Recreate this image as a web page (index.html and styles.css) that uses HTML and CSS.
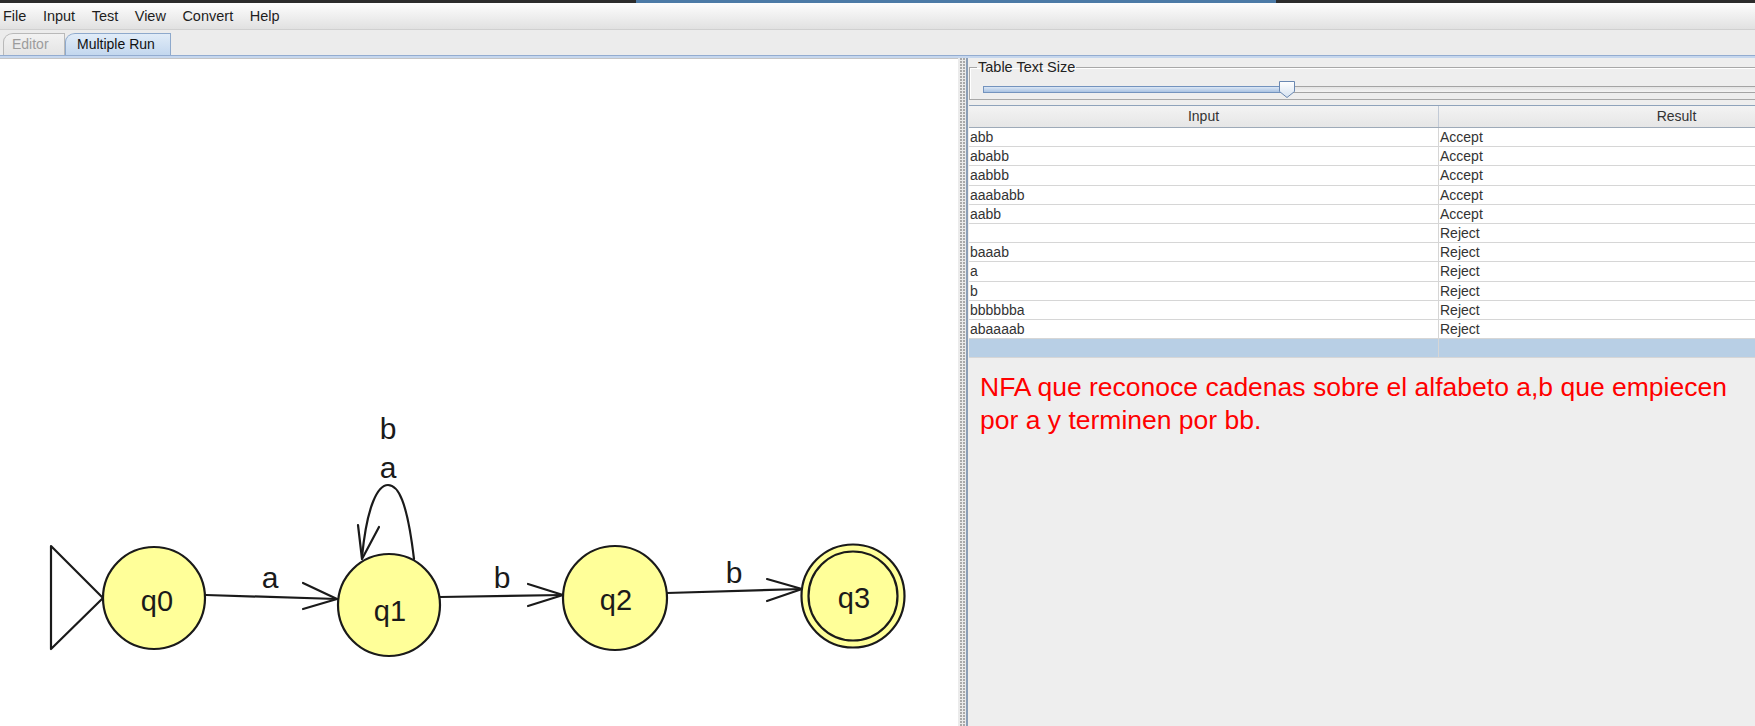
FILE: index.html
```html
<!DOCTYPE html>
<html lang="es">
<head>
<meta charset="utf-8">
<title>JFLAP - Multiple Run</title>
<link rel="stylesheet" href="styles.css">
</head>
<body>
<div class="topstrip"><div class="topstrip-active"></div></div>
<div class="menubar">
  <span>File</span><span>Input</span><span>Test</span><span>View</span><span>Convert</span><span>Help</span>
</div>
<div class="tabbar">
  <div class="tab tab-disabled">Editor</div>
  <div class="tab tab-selected">Multiple Run</div>
</div>
<div class="tabline"></div>
<div class="main">
  <div class="canvas">
    <svg width="958" height="667" viewBox="0 59 958 667" xmlns="http://www.w3.org/2000/svg">
      <g fill="none" stroke="#1a1a1a" stroke-width="2.2" stroke-linecap="round" stroke-linejoin="round">
        <polygon points="51,546 103,598 51,649" fill="#ffffff"/>
        <line x1="206" y1="595" x2="337" y2="599"/>
        <polyline points="303,583 337,599 303,609"/>
        <line x1="440" y1="597" x2="563" y2="595"/>
        <polyline points="528,584 563,595 528,606"/>
        <line x1="667" y1="593" x2="802" y2="589"/>
        <polyline points="767,579 802,589 767,601"/>
        <path d="M414 559 C407 500 398 485 388 485 C378 485 367 505 362 557"/>
        <polyline points="358,525 362,559 379,527"/>
      </g>
      <g fill="#ffff99" stroke="#1a1a1a" stroke-width="2.2">
        <circle cx="154" cy="598" r="51"/>
        <circle cx="389" cy="605" r="51"/>
        <circle cx="615" cy="598" r="52"/>
        <circle cx="853" cy="596" r="51.5"/>
        <circle cx="853" cy="596" r="44.5"/>
      </g>
      <g class="diagram-text" text-anchor="middle" fill="#1a1a1a">
        <text x="157" y="611">q0</text>
        <text x="390" y="621">q1</text>
        <text x="616" y="610">q2</text>
        <text x="854" y="608">q3</text>
        <text class="edge-label" x="270" y="588">a</text>
        <text class="edge-label" x="502" y="588">b</text>
        <text class="edge-label" x="734" y="583">b</text>
        <text class="edge-label" x="388" y="478">a</text>
        <text class="edge-label" x="388" y="439">b</text>
      </g>
    </svg>
  </div>
  <div class="divider"><div class="grip"></div></div>
  <div class="side">
    <div class="side-inner">
      <fieldset class="sizebox">
        <legend>Table Text Size</legend>
        <div class="slider">
          <div class="track-fill"></div>
          <div class="track-rest"></div>
          <svg class="thumb" width="18" height="19" viewBox="0 0 18 19" xmlns="http://www.w3.org/2000/svg">
            <defs>
              <linearGradient id="tg" x1="0" y1="0" x2="0" y2="1">
                <stop offset="0" stop-color="#ffffff"/>
                <stop offset="1" stop-color="#d6e2f0"/>
              </linearGradient>
            </defs>
            <path d="M1.5 1.5 H16.5 V11.5 L9 17.5 L1.5 11.5 Z" fill="url(#tg)" stroke="#6a88b2" stroke-width="1"/>
          </svg>
        </div>
      </fieldset>
      <div class="table">
        <div class="thead"><div class="th">Input</div><div class="th">Result</div></div>
        <div class="tr"><div class="td">abb</div><div class="td">Accept</div></div>
        <div class="tr"><div class="td">ababb</div><div class="td">Accept</div></div>
        <div class="tr"><div class="td">aabbb</div><div class="td">Accept</div></div>
        <div class="tr"><div class="td">aaababb</div><div class="td">Accept</div></div>
        <div class="tr"><div class="td">aabb</div><div class="td">Accept</div></div>
        <div class="tr"><div class="td"></div><div class="td">Reject</div></div>
        <div class="tr"><div class="td">baaab</div><div class="td">Reject</div></div>
        <div class="tr"><div class="td">a</div><div class="td">Reject</div></div>
        <div class="tr"><div class="td">b</div><div class="td">Reject</div></div>
        <div class="tr"><div class="td">bbbbbba</div><div class="td">Reject</div></div>
        <div class="tr"><div class="td">abaaaab</div><div class="td">Reject</div></div>
        <div class="tr tr-selected"><div class="td"></div><div class="td"></div></div>
      </div>
      <p class="note">NFA que reconoce cadenas sobre el alfabeto a,b que empiecen por a y terminen por bb.</p>
    </div>
  </div>
</div>
</body>
</html>
```

FILE: styles.css
```css
* { box-sizing: border-box; }

html, body { margin: 0; padding: 0; }

body {
  width: 1755px;
  height: 726px;
  overflow: hidden;
  background: #eeeeee;
  font-family: "Liberation Sans", Arial, sans-serif;
  color: #222222;
}

.topstrip {
  height: 3px;
  display: flex;
  background: #2c2c2c;
}
.topstrip-active {
  margin-left: 636px;
  width: 640px;
  background: #4c7aa6;
}

.menubar {
  height: 27px;
  display: flex;
  align-items: center;
  gap: 16.5px;
  padding-left: 3px;
  background: linear-gradient(#fdfdfd, #e1e1e1);
  border-bottom: 1px solid #d0d0d0;
  font-size: 14.5px;
  color: #1e1e1e;
}

.tabbar {
  height: 25px;
  display: flex;
  align-items: flex-end;
  padding-left: 3px;
  background: #ececec;
}
.tab {
  height: 22px;
  font-size: 14px;
  line-height: 21px;
  border: 1px solid #b9b9b9;
  border-bottom: none;
  border-top-left-radius: 10px 9px;
}
.tab-disabled {
  width: 62px;
  padding-left: 8px;
  color: #9c9c9c;
  background: linear-gradient(#f2f2f2, #e4e4e4);
}
.tab-selected {
  width: 106px;
  padding-left: 11px;
  color: #111111;
  border-color: #8ea9cc;
  background: linear-gradient(#e1ecf8, #c3d7ee);
}

.tabline {
  height: 3px;
  background: #c6d7ee;
  border-top: 1px solid #93acd0;
}

.main {
  display: flex;
  height: 668px;
}

.canvas {
  width: 958px;
  background: #ffffff;
  border-top: 1px solid #c5c5c5;
}
.canvas svg { display: block; }

.diagram-text {
  font-family: "Liberation Sans", Arial, sans-serif;
  font-size: 29px;
}
.edge-label { font-size: 30px; }

.divider {
  width: 8px;
  background: #ebebeb;
  display: flex;
  justify-content: center;
}
.grip {
  width: 5px;
  background-image: radial-gradient(circle at 1px 1px, #a9a9a9 0.9px, transparent 1.3px);
  background-size: 3px 3px;
}

.side {
  flex: 1;
  overflow: hidden;
  background: #eeeeee;
  border-left: 2px solid #8b9eb6;
}
.side-inner {
  width: 950px;
  padding-left: 1px;
}

.sizebox {
  margin: 1px 0 0 0;
  padding: 0 0 1px 7px;
  border: 1px solid #a8a8a8;
  box-shadow: inset 1px 1px 0 #ffffff;
  min-width: 0;
}
.sizebox legend {
  padding: 0 1px;
  font-size: 14.5px;
  line-height: 17px;
  color: #222222;
}

.slider {
  position: relative;
  display: flex;
  align-items: center;
  margin: 4px 0 0 6px;
  height: 18px;
  width: 930px;
}
.track-fill {
  width: 304px;
  height: 7px;
  border: 1px solid #7393be;
  border-right: none;
  background: linear-gradient(#dbe7f5, #a9c2e2);
}
.track-rest {
  flex: 1;
  height: 7px;
  border: 1px solid #a4a4a4;
  border-left: none;
  background: linear-gradient(#e4e4e4, #f4f4f4);
}
.thumb {
  position: absolute;
  left: 295px;
  top: 0;
}

.table {
  margin-top: 5px;
  width: 946px;
  border-top: 1px solid #8fa3bb;
  font-size: 14px;
  color: #333333;
}
.thead {
  display: grid;
  grid-template-columns: 470px 476px;
  height: 22px;
  background: linear-gradient(#f3f3f3, #e6e6e6);
  border-bottom: 1px solid #9eaab8;
}
.th {
  text-align: center;
  line-height: 21px;
  border-right: 1px solid #c2cad6;
}
.tr {
  display: grid;
  grid-template-columns: 470px 476px;
  height: 19.2px;
  background: #ffffff;
  border-bottom: 1px solid #d6d6d6;
}
.td {
  padding-left: 1px;
  line-height: 18px;
  border-right: 1px solid #d6d6d6;
  white-space: nowrap;
}
.tr-selected { background: #b8cfe5; }

.note {
  margin: 0;
  padding: 13px 0 0 11px;
  width: 790px;
  font-size: 26.5px;
  line-height: 33px;
  color: #ff0000;
}
```
